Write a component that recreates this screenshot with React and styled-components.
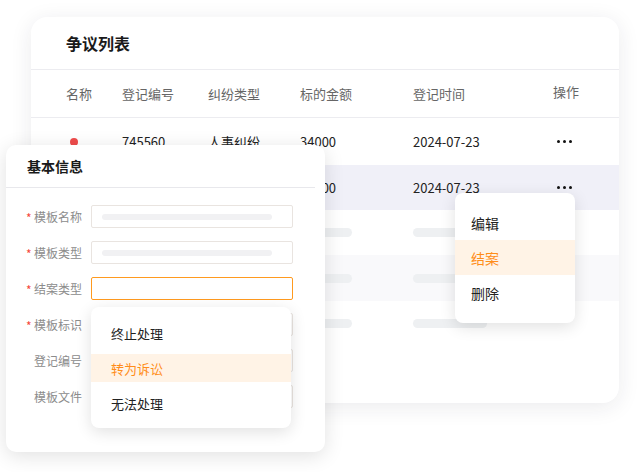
import styled, { createGlobalStyle } from 'styled-components';

const GlobalStyle = createGlobalStyle`
  body {
    margin: 0;
    background: #ffffff;
    font-family: "Noto Sans CJK SC", "Noto Sans", sans-serif;
    color: #222;
  }
`

const Page = styled.div`
  position: relative;
  width: 638px;
  height: 472px;
  overflow: hidden;
  padding: 17px 0 0 31px;
  box-sizing: border-box;
`

const Card = styled.div`
  position: relative;
  width: 588px;
  height: 386px;
  background: #fff;
  border-radius: 16px;
  box-shadow: 0 4px 22px rgba(30, 30, 60, 0.09);
  overflow: visible;
`

const CardHead = styled.div`
  height: 52px;
  display: flex;
  align-items: center;
  padding-left: 35px;
  border-bottom: 1px solid #ececf0;
  font-size: 16px;
  font-weight: 600;
  color: #1a1a1a;
`

const Row = styled.div`
  display: grid;
  grid-template-columns: 56px 86px 92px 113px 140px 1fr;
  align-items: center;
  padding-left: 35px;
  height: ${p => p.h || 46}px;
  background: ${p => p.bg || '#fff'};
  border-bottom: ${p => (p.head ? '1px solid #ececf0' : 'none')};
  font-size: 13px;
  color: ${p => (p.head ? '#666' : '#222')};
`

const Dot = styled.span`
  display: block;
  width: 8px;
  height: 8px;
  border-radius: 50%;
  background: #ef4c4c;
  margin-left: 4px;
`

const More = styled.div`
  display: flex;
  gap: 3px;
  padding-left: 4px;
  span {
    width: 3px;
    height: 3px;
    border-radius: 50%;
    background: #111;
  }
`

const Bar = styled.span`
  display: block;
  height: 9px;
  width: ${p => p.w}px;
  border-radius: 5px;
  background: #eef0f2;
`

const Menu = styled.div`
  position: absolute;
  left: ${p => p.x}px;
  top: ${p => p.y}px;
  width: ${p => p.w}px;
  background: #fff;
  border-radius: 8px;
  box-shadow: 0 4px 16px rgba(0, 0, 0, 0.12);
  display: flex;
  flex-direction: column;
  gap: ${p => p.gap || 0}px;
  padding: 12px 0 ${p => p.pb || 13}px;
  z-index: 2;
`

const MenuItem = styled.div`
  height: ${p => p.h}px;
  display: flex;
  align-items: center;
  padding-left: ${p => p.pl}px;
  font-size: ${p => p.fs}px;
  color: ${p => (p.active ? '#ff8d1a' : '#222')};
  background: ${p => (p.active ? '#fff3e6' : 'transparent')};
`

const Panel = styled.div`
  position: absolute;
  left: 6px;
  top: 145px;
  width: 319px;
  height: 307px;
  background: #fff;
  border-radius: 10px;
  box-shadow: 0 4px 20px rgba(0, 0, 0, 0.12);
  z-index: 3;
`

const PanelHead = styled.div`
  height: 42px;
  margin-right: 10px;
  display: flex;
  align-items: center;
  padding-left: 21px;
  border-bottom: 1px solid #e8e8ec;
  font-size: 14px;
  font-weight: 600;
  color: #1a1a1a;
`

const Form = styled.div`
  display: flex;
  flex-direction: column;
  gap: 13px;
  padding: 17px 0 0 20px;
`

const Field = styled.div`
  display: flex;
  align-items: center;
  height: 23px;
`

const Label = styled.div`
  width: 65px;
  display: flex;
  align-items: center;
  font-size: 12px;
  color: #8c8c8c;
  i {
    width: 8px;
    font-style: normal;
    color: #f5483b;
    font-size: 12px;
    line-height: 1;
    padding-top: 2px;
  }
`

const Input = styled.div`
  width: 202px;
  height: 23px;
  box-sizing: border-box;
  border: 1px solid ${p => (p.focus ? '#ff9a1f' : '#e9e4e0')};
  border-radius: 2px;
  display: flex;
  align-items: center;
  padding-left: 10px;
`

const Fill = styled.span`
  display: block;
  width: 170px;
  height: 6px;
  border-radius: 3px;
  background: #f1f1f3;
`

const rows = [
  { dot: true, no: '745560', type: '人事纠纷', amount: '34000', date: '2024-07-23', h: 47 },
  { dot: false, no: '', type: '', amount: '34000', date: '2024-07-23', h: 45, bg: '#f0f0f8' },
]

const fields = [
  { label: '模板名称', req: true, fill: true },
  { label: '模板类型', req: true, fill: true },
  { label: '结案类型', req: true, focus: true },
  { label: '模板标识', req: true },
  { label: '登记编号' },
  { label: '模板文件' },
]

export default function App() {
  return (
    <>
      <GlobalStyle />
      <Page>
        <Card>
          <CardHead>争议列表</CardHead>
          <Row head h={47}>
            <span>名称</span>
            <span>登记编号</span>
            <span>纠纷类型</span>
            <span>标的金额</span>
            <span>登记时间</span>
            <span style={{ marginTop: -4 }}>操作</span>
          </Row>
          {rows.map((r, i) => (
            <Row key={i} h={r.h} bg={r.bg}>
              <span>{r.dot && <Dot />}</span>
              <span>{r.no}</span>
              <span>{r.type}</span>
              <span>{r.amount}</span>
              <span>{r.date}</span>
              <More><span /><span /><span /></More>
            </Row>
          ))}
          {['#fff', '#f9f9fb', '#fff'].map((bg, i) => (
            <Row key={'p' + i} h={i === 1 ? 46 : 45} bg={bg}>
              <Bar w={36} />
              <Bar w={60} />
              <Bar w={60} />
              <Bar w={52} />
              <Bar w={74} />
              <span />
            </Row>
          ))}
          <Menu x={424} y={176} w={120} pb={13}>
            <MenuItem h={35} pl={16} fs={14}>编辑</MenuItem>
            <MenuItem h={35} pl={16} fs={14} active>结案</MenuItem>
            <MenuItem h={35} pl={16} fs={14}>删除</MenuItem>
          </Menu>
        </Card>
        <Panel>
          <PanelHead>基本信息</PanelHead>
          <Form>
            {fields.map(f => (
              <Field key={f.label}>
                <Label><i>{f.req ? '*' : ''}</i>{f.label}</Label>
                <Input focus={f.focus}>{f.fill && <Fill />}</Input>
              </Field>
            ))}
          </Form>
          <Menu x={85} y={162} w={200} gap={7} pb={11}>
            <MenuItem h={28} pl={20} fs={13}>终止处理</MenuItem>
            <MenuItem h={28} pl={20} fs={13} active>转为诉讼</MenuItem>
            <MenuItem h={28} pl={20} fs={13}>无法处理</MenuItem>
          </Menu>
        </Panel>
      </Page>
    </>
  );
}
